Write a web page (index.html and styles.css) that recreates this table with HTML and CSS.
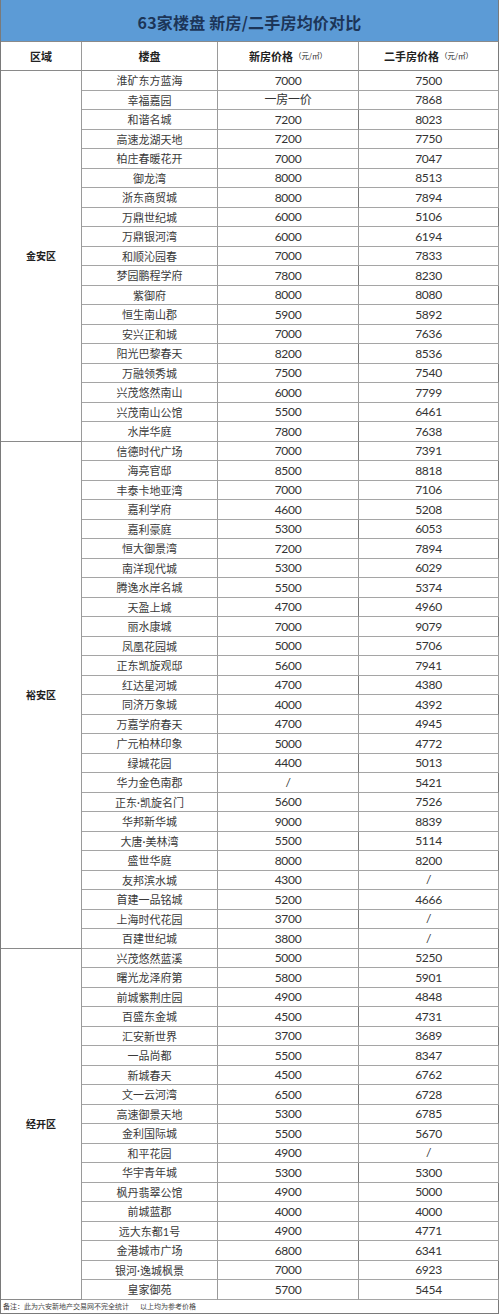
FILE: index.html
```html
<!DOCTYPE html>
<html lang="zh">
<head>
<meta charset="utf-8">
<title>63家楼盘 新房/二手房均价对比</title>
<link rel="stylesheet" href="styles.css">
</head>
<body>
<div class="sheet">
  <div class="title">63家楼盘 新房/二手房均价对比</div>
  <div class="cell head">区域</div>
  <div class="cell head">楼盘</div>
  <div class="cell head">新房价格<span class="unit">（元/㎡）</span></div>
  <div class="cell head">二手房价格<span class="unit">（元/㎡）</span></div>

  <div class="cell region r19">金安区</div>
  <div class="cell name">淮矿东方蓝海</div><div class="cell num">7000</div><div class="cell num">7500</div>
  <div class="cell name">幸福嘉园</div><div class="cell num">一房一价</div><div class="cell num">7868</div>
  <div class="cell name">和谐名城</div><div class="cell num">7200</div><div class="cell num">8023</div>
  <div class="cell name">高速龙湖天地</div><div class="cell num">7200</div><div class="cell num">7750</div>
  <div class="cell name">柏庄春暖花开</div><div class="cell num">7000</div><div class="cell num">7047</div>
  <div class="cell name">御龙湾</div><div class="cell num">8000</div><div class="cell num">8513</div>
  <div class="cell name">浙东商贸城</div><div class="cell num">8000</div><div class="cell num">7894</div>
  <div class="cell name">万鼎世纪城</div><div class="cell num">6000</div><div class="cell num">5106</div>
  <div class="cell name">万鼎银河湾</div><div class="cell num">6000</div><div class="cell num">6194</div>
  <div class="cell name">和顺沁园春</div><div class="cell num">7000</div><div class="cell num">7833</div>
  <div class="cell name">梦园鹏程学府</div><div class="cell num">7800</div><div class="cell num">8230</div>
  <div class="cell name">紫御府</div><div class="cell num">8000</div><div class="cell num">8080</div>
  <div class="cell name">恒生南山郡</div><div class="cell num">5900</div><div class="cell num">5892</div>
  <div class="cell name">安兴正和城</div><div class="cell num">7000</div><div class="cell num">7636</div>
  <div class="cell name">阳光巴黎春天</div><div class="cell num">8200</div><div class="cell num">8536</div>
  <div class="cell name">万融领秀城</div><div class="cell num">7500</div><div class="cell num">7540</div>
  <div class="cell name">兴茂悠然南山</div><div class="cell num">6000</div><div class="cell num">7799</div>
  <div class="cell name">兴茂南山公馆</div><div class="cell num">5500</div><div class="cell num">6461</div>
  <div class="cell name">水岸华庭</div><div class="cell num">7800</div><div class="cell num">7638</div>

  <div class="cell region r26">裕安区</div>
  <div class="cell name">信德时代广场</div><div class="cell num">7000</div><div class="cell num">7391</div>
  <div class="cell name">海亮官邸</div><div class="cell num">8500</div><div class="cell num">8818</div>
  <div class="cell name">丰泰卡地亚湾</div><div class="cell num">7000</div><div class="cell num">7106</div>
  <div class="cell name">嘉利学府</div><div class="cell num">4600</div><div class="cell num">5208</div>
  <div class="cell name">嘉利豪庭</div><div class="cell num">5300</div><div class="cell num">6053</div>
  <div class="cell name">恒大御景湾</div><div class="cell num">7200</div><div class="cell num">7894</div>
  <div class="cell name">南洋现代城</div><div class="cell num">5300</div><div class="cell num">6029</div>
  <div class="cell name">腾逸水岸名城</div><div class="cell num">5500</div><div class="cell num">5374</div>
  <div class="cell name">天盈上城</div><div class="cell num">4700</div><div class="cell num">4960</div>
  <div class="cell name">丽水康城</div><div class="cell num">7000</div><div class="cell num">9079</div>
  <div class="cell name">凤凰花园城</div><div class="cell num">5000</div><div class="cell num">5706</div>
  <div class="cell name">正东凯旋观邸</div><div class="cell num">5600</div><div class="cell num">7941</div>
  <div class="cell name">红达星河城</div><div class="cell num">4700</div><div class="cell num">4380</div>
  <div class="cell name">同济万象城</div><div class="cell num">4000</div><div class="cell num">4392</div>
  <div class="cell name">万嘉学府春天</div><div class="cell num">4700</div><div class="cell num">4945</div>
  <div class="cell name">广元柏林印象</div><div class="cell num">5000</div><div class="cell num">4772</div>
  <div class="cell name">绿城花园</div><div class="cell num">4400</div><div class="cell num">5013</div>
  <div class="cell name">华力金色南郡</div><div class="cell num">/</div><div class="cell num">5421</div>
  <div class="cell name">正东·凯旋名门</div><div class="cell num">5600</div><div class="cell num">7526</div>
  <div class="cell name">华邦新华城</div><div class="cell num">9000</div><div class="cell num">8839</div>
  <div class="cell name">大唐·美林湾</div><div class="cell num">5500</div><div class="cell num">5114</div>
  <div class="cell name">盛世华庭</div><div class="cell num">8000</div><div class="cell num">8200</div>
  <div class="cell name">友邦滨水城</div><div class="cell num">4300</div><div class="cell num">/</div>
  <div class="cell name">首建一品铭城</div><div class="cell num">5200</div><div class="cell num">4666</div>
  <div class="cell name">上海时代花园</div><div class="cell num">3700</div><div class="cell num">/</div>
  <div class="cell name">百建世纪城</div><div class="cell num">3800</div><div class="cell num">/</div>

  <div class="cell region r18">经开区</div>
  <div class="cell name">兴茂悠然蓝溪</div><div class="cell num">5000</div><div class="cell num">5250</div>
  <div class="cell name">曙光龙泽府第</div><div class="cell num">5800</div><div class="cell num">5901</div>
  <div class="cell name">前城紫荆庄园</div><div class="cell num">4900</div><div class="cell num">4848</div>
  <div class="cell name">百盛东金城</div><div class="cell num">4500</div><div class="cell num">4731</div>
  <div class="cell name">汇安新世界</div><div class="cell num">3700</div><div class="cell num">3689</div>
  <div class="cell name">一品尚都</div><div class="cell num">5500</div><div class="cell num">8347</div>
  <div class="cell name">新城春天</div><div class="cell num">4500</div><div class="cell num">6762</div>
  <div class="cell name">文一云河湾</div><div class="cell num">6500</div><div class="cell num">6728</div>
  <div class="cell name">高速御景天地</div><div class="cell num">5300</div><div class="cell num">6785</div>
  <div class="cell name">金利国际城</div><div class="cell num">5500</div><div class="cell num">5670</div>
  <div class="cell name">和平花园</div><div class="cell num">4900</div><div class="cell num">/</div>
  <div class="cell name">华宇青年城</div><div class="cell num">5300</div><div class="cell num">5300</div>
  <div class="cell name">枫丹翡翠公馆</div><div class="cell num">4900</div><div class="cell num">5000</div>
  <div class="cell name">前城蓝郡</div><div class="cell num">4000</div><div class="cell num">4000</div>
  <div class="cell name">远大东都1号</div><div class="cell num">4900</div><div class="cell num">4771</div>
  <div class="cell name">金港城市广场</div><div class="cell num">6800</div><div class="cell num">6341</div>
  <div class="cell name">银河·逸城枫景</div><div class="cell num">7000</div><div class="cell num">6923</div>
  <div class="cell name">皇家御苑</div><div class="cell num">5700</div><div class="cell num">5454</div>

  <div class="note">备注：此为六安新地产交易网不完全统计<span class="gap"></span>以上均为参考价格</div>
</div>
</body>
</html>
```
FILE: styles.css
```css
html, body {
  margin: 0;
  padding: 0;
  background: #ffffff;
}

body {
  font-family: "Noto Sans CJK SC", "Noto Sans", sans-serif;
  color: #333333;
}

.sheet {
  width: 498px;
  display: grid;
  grid-template-columns: 81px 136px 141px 140px;
  grid-template-rows: 42px 29px repeat(63, 19.5px) 14px;
  border-left: 1px solid #7a7a7a;
}

.title {
  grid-column: 1 / -1;
  background: #5c9bd6;
  color: #1c3558;
  font-weight: 700;
  font-size: 16px;
  letter-spacing: 0.2px;
  display: flex;
  align-items: center;
  justify-content: center;
  padding-top: 2px;
  box-sizing: border-box;
  border-right: 1px solid #7a7a7a;
  border-bottom: 1px solid #8a8a8a;
}

.cell {
  box-sizing: border-box;
  border-right: 1px solid #9a9a9a;
  border-bottom: 1px solid #a5a5a5;
  display: flex;
  align-items: center;
  justify-content: center;
  white-space: nowrap;
  font-size: 11px;
  line-height: 1;
}

.head {
  font-weight: 700;
  font-size: 11px;
  color: #222222;
  border-bottom-color: #8a8a8a;
}

.unit {
  font-weight: 400;
  font-size: 7.5px;
  margin-left: 1px;
}

.region {
  font-weight: 700;
  font-size: 10px;
  color: #222222;
  border-bottom-color: #8a8a8a;
}

.r19 { grid-row: span 19; }
.r26 { grid-row: span 26; }
.r18 { grid-row: span 18; }

.name {
  font-family: "Lato", "Noto Sans CJK SC", sans-serif;
  font-size: 11px;
  color: #3a3a3a;
  padding-top: 1px;
}

.num {
  font-family: "Lato", "Noto Sans CJK SC", sans-serif;
  font-size: 12px;
  letter-spacing: -0.3px;
  color: #333333;
  padding-top: 1px;
}

.head:nth-child(5),
.num:nth-child(4n+2) {
  border-right-color: #7a7a7a;
}

.note {
  grid-column: 1 / -1;
  box-sizing: border-box;
  border-right: 1px solid #7a7a7a;
  border-bottom: 1px solid #7a7a7a;
  font-size: 7px;
  color: #444444;
  display: flex;
  align-items: center;
  padding-left: 2px;
  white-space: nowrap;
}

.gap {
  display: inline-block;
  width: 11px;
}
```
